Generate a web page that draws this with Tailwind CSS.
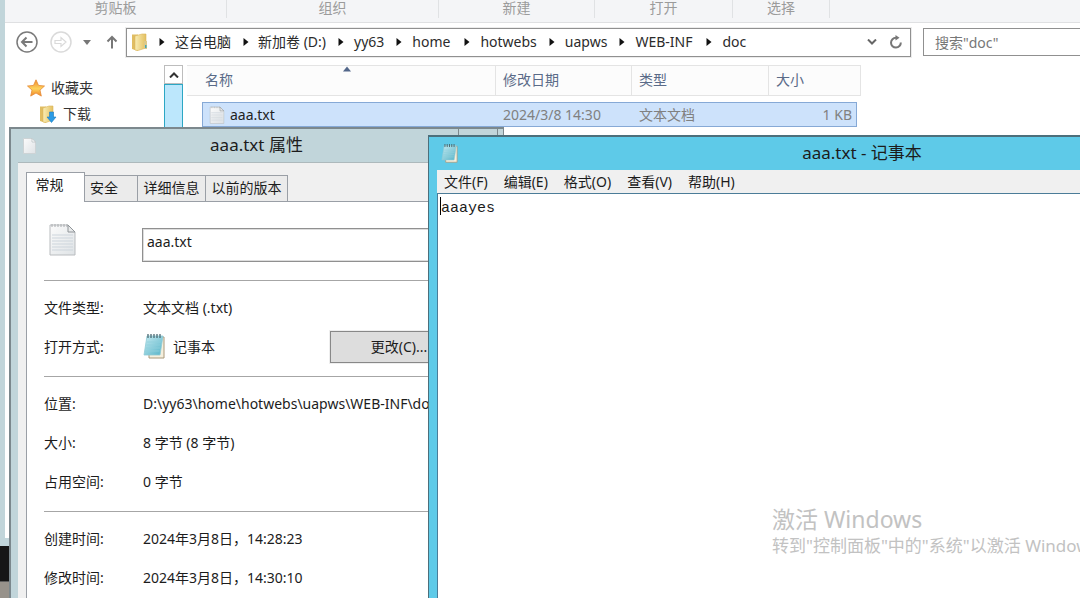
<!DOCTYPE html>
<html lang="zh-CN">
<head>
<meta charset="utf-8">
<title>doc</title>
<script src="https://cdn.jsdelivr.net/npm/@tailwindcss/browser@4"></script>
</head>
<body class="relative h-screen overflow-hidden bg-[#161616] font-['Noto_Sans','Noto_Sans_CJK_SC',sans-serif] text-sm text-[#1c1c1c]">

<svg class="absolute size-0" aria-hidden="true">
  <defs>
    <linearGradient id="folder" x1="0" y1="0" x2="1" y2="0"><stop offset="0" stop-color="#f9edb4"/><stop offset="1" stop-color="#e3c061"/></linearGradient>
    <linearGradient id="star" x1="0" y1="0" x2="0" y2="1"><stop offset="0" stop-color="#f08a2c"/><stop offset=".55" stop-color="#fdd35c"/><stop offset="1" stop-color="#f08224"/></linearGradient>
    <linearGradient id="pad" x1="0" y1="0" x2="1" y2="1"><stop offset="0" stop-color="#c8ecf2"/><stop offset="1" stop-color="#55b3c7"/></linearGradient>
    <linearGradient id="paper" x1="0" y1="0" x2="1" y2="1"><stop offset="0" stop-color="#fbfbfb"/><stop offset="1" stop-color="#dfe3e6"/></linearGradient>
    <symbol id="doc" viewBox="0 0 27 33">
      <path d="M1 2h18l7 7v23H1z" fill="url(#paper)" stroke="#b9bcbf"/>
      <path d="M19 2v7h7z" fill="#e8eaeb" stroke="#8f9498"/>
      <path d="M3 12h21M3 15h21M3 18h21M3 21h21M3 24h21M3 27h21" stroke="#cdd5dc"/>
      <path d="M3 1v3M6 1v3M9 1v3M12 1v3M15 1v3M18 1v3" stroke="#a8abae"/>
    </symbol>
    <symbol id="notepad" viewBox="0 0 22 25">
      <path d="M6 3h15v21H6z" fill="#f5efdd" stroke="#a9987a"/>
      <path d="M4 2h16l-3 19H1z" fill="url(#pad)" stroke="#8fcad6" stroke-width=".8"/>
      <path d="M4 8h14M3.500 11h14M3 14h14M2.500 17h14" stroke="#8fcfdc" stroke-width=".8"/>
      <path d="M5 0v4M8 0v4M11 0v4M14 0v4M17 0v4" stroke="#4d6b73" stroke-width="1.300"/>
    </symbol>
    <symbol id="crumb" viewBox="0 0 6 10"><path d="M.5 1v8L5.500 5z" fill="#111"/></symbol>
  </defs>
</svg>

<!-- Explorer window -->
<main class="h-[546px] border-b-8 border-l-[5px] border-[#c1d5da] bg-white">
  <div class="flex h-[23px] border-b border-[#dfe0e2] bg-[#f4f5f7] leading-4 text-[#9b9b9b]">
    <div class="mb-1 w-[222px] border-r border-[#e0e2e4] text-center">剪贴板</div>
    <div class="mb-1 w-[212px] border-r border-[#e0e2e4] text-center">组织</div>
    <div class="mb-1 w-[156px] border-r border-[#e0e2e4] text-center">新建</div>
    <div class="mb-1 w-[138px] border-r border-[#e0e2e4] text-center">打开</div>
    <div class="mb-1 w-[97px] border-r border-[#e0e2e4] text-center">选择</div>
  </div>

  <div class="flex h-[42px] items-center pb-1">
    <button aria-label="后退" class="ml-[11px]"><svg class="size-[22px]" viewBox="0 0 22 22" fill="none" stroke="#7a7a7a"><circle cx="11" cy="11" r="10" stroke-width="1.500"/><path d="M16.500 11H6M10.500 6.500L6 11l4.500 4.500" stroke-width="2"/></svg></button>
    <button aria-label="前进" class="ml-3"><svg class="size-[22px]" viewBox="0 0 22 22" fill="none" stroke="#dadada"><circle cx="11" cy="11" r="10" stroke-width="1.500"/><path d="M5 9.500h6V6.500l5 4.500-5 4.500v-3H5z" stroke-width="1.200"/></svg></button>
    <button aria-label="最近位置" class="ml-[11px]"><svg class="h-[5px] w-2" viewBox="0 0 8 5"><path d="M0 0h8L4 5z" fill="#777"/></svg></button>
    <button aria-label="上移" class="ml-[15px]"><svg class="h-3.5 w-3" viewBox="0 0 12 14" fill="none" stroke="#777" stroke-width="2"><path d="M6 13.500V2M1.500 6.500L6 2l4.500 4.500"/></svg></button>
    <nav aria-label="地址" class="ml-2 flex h-[29px] w-[785px] shrink-0 items-center border border-[#909090] bg-white text-[#2b2b2b] shadow-[0_0_0_1px_#ececec]">
      <svg class="ml-1 size-[18px]" viewBox="0 0 18 18"><path d="M1 1.500h6V18L1 16z" fill="#e0bd62"/><path d="M4 3l7-2h4v14l-8 2.500-3-.5z" fill="url(#folder)" stroke="#dcb65a" stroke-width=".6"/><path d="M13 8h3v8h-3z" fill="#dcc98a"/><path d="M14 12h1.500v3H14z" fill="#45a6b5"/></svg>
      <svg class="ml-[10px] h-[10px] w-1.5"><use href="#crumb"/></svg><button class="ml-[10px]">这台电脑</button>
      <svg class="ml-3 h-[10px] w-1.5"><use href="#crumb"/></svg><button class="ml-[9px]">新加卷 (D:)</button>
      <svg class="ml-3 h-[10px] w-1.5"><use href="#crumb"/></svg><button class="ml-[10px]">yy63</button>
      <svg class="ml-3 h-[10px] w-1.5"><use href="#crumb"/></svg><button class="ml-[10px]">home</button>
      <svg class="ml-3.5 h-[10px] w-1.5"><use href="#crumb"/></svg><button class="ml-[10px]">hotwebs</button>
      <svg class="ml-3 h-[10px] w-1.5"><use href="#crumb"/></svg><button class="ml-[10px]">uapws</button>
      <svg class="ml-3 h-[10px] w-1.5"><use href="#crumb"/></svg><button class="ml-[10px]">WEB-INF</button>
      <svg class="ml-3.5 h-[10px] w-1.5"><use href="#crumb"/></svg><button class="ml-[10px]">doc</button>
      <button aria-label="展开地址" class="ml-auto"><svg class="h-1.5 w-2.5" viewBox="0 0 10 6" fill="none" stroke="#666" stroke-width="2"><path d="M1 .5l4 4 4-4"/></svg></button>
      <button aria-label="刷新" class="mr-[7px] ml-3"><svg class="size-[14px]" viewBox="0 0 14 14" fill="none" stroke="#777" stroke-width="2"><path d="M11.800 7.500A4.900 4.900 0 1 1 7 2.800h1"/><path d="M6.500 0v5.600L10.500 2.800z" fill="#777" stroke="none"/></svg></button>
    </nav>
    <input type="search" aria-label="搜索" placeholder='搜索"doc"' class="ml-3 h-7 w-[220px] shrink-0 border border-[#909090] bg-white px-[11px] placeholder:text-[#777777]">
  </div>

  <div class="flex">
    <nav aria-label="收藏" class="flex h-[62px] w-[159px] flex-col pt-[10px] pl-[22px] text-[#333333]">
      <a href="#" class="flex h-[26px] items-center gap-1.5"><svg class="size-[18px]" viewBox="0 0 18 18"><path d="M9 .8l2.500 5.600 6 .6-4.500 4.100 1.300 6L9 14l-5.300 3.100 1.300-6L.5 7l6-.6z" fill="url(#star)" stroke="#e68a35" stroke-width=".8"/></svg>收藏夹</a>
      <a href="#" class="flex h-[26px] items-center gap-1.5 pl-3"><svg class="size-[18px]" viewBox="0 0 18 18"><path d="M1 1.500h6V18L1 16z" fill="#e0bd62"/><path d="M4 3l6-2h4v14l-7 2.500-3-.5z" fill="url(#folder)" stroke="#dcb65a" stroke-width=".6"/><path d="M10.500 7h4v5H17l-4.500 5.500L8 12h2.500z" fill="#2b9be6" stroke="#1d7cc0" stroke-width=".6"/></svg>下载</a>
    </nav>
    <div class="flex h-[65px] w-[19px] flex-col">
      <button aria-label="向上滚动" class="flex h-[19px] items-center justify-center border border-[#bdbdbd] bg-white"><svg class="h-1.5 w-2.5" viewBox="0 0 10 6" fill="none" stroke="#333" stroke-width="2"><path d="M1 5.500l4-4 4 4"/></svg></button>
      <div class="flex-1 border border-[#2ca7c4] bg-[#bce7fc]"></div>
    </div>
    <div class="relative pl-1">
      <svg class="absolute top-px left-40 h-1.5 w-2" viewBox="0 0 8 5"><path d="M0 5h8L4 0z" fill="#53678a"/></svg>
      <table class="w-[673px] table-fixed border-separate border-spacing-0 text-left text-[#808080]">
        <colgroup><col class="w-[15px]"><col class="w-[294px]"><col class="w-[136px]"><col class="w-[137px]"><col class="w-[88px]"><col class="w-1"></colgroup>
        <thead>
          <tr class="h-[31px] text-[#5a6b88]">
            <th colspan="2" class="border-y border-r border-[#e4e4e4] bg-[#fcfcfc] pb-px pl-[18px] font-normal">名称</th>
            <th class="border-y border-r border-[#e4e4e4] bg-[#fcfcfc] pb-px pl-[7px] font-normal">修改日期</th>
            <th class="border-y border-r border-[#e4e4e4] bg-[#fcfcfc] pb-px pl-[7px] font-normal">类型</th>
            <th colspan="2" class="border-y border-r border-[#e4e4e4] bg-[#fcfcfc] pb-px pl-[7px] font-normal">大小</th>
          </tr>
        </thead>
        <tbody>
          <tr class="h-1.5"><td colspan="6"></td></tr>
          <tr class="h-[25px]">
            <td></td>
            <td class="border-y border-l border-[#86a9d6] bg-[#cde2fb] pl-1.5 text-[#222222]"><div class="flex items-center gap-[5px]"><svg class="h-[18px] w-4"><use href="#doc"/></svg>aaa.txt</div></td>
            <td class="border-y border-[#86a9d6] bg-[#cde2fb] pl-[7px]">2024/3/8 14:30</td>
            <td class="border-y border-[#86a9d6] bg-[#cde2fb] pl-[7px]">文本文档</td>
            <td class="border-y border-r border-[#86a9d6] bg-[#cde2fb] pr-1 text-right">1 KB</td>
            <td></td>
          </tr>
        </tbody>
      </table>
    </div>
  </div>
</main>
<div class="h-[35px] bg-[#161616]"></div>
<div class="h-[17px] border-t border-[#5c5c5c] bg-[#97928b]"></div>

<!-- Properties window -->
<section aria-label="aaa.txt 属性" class="absolute top-[127px] bottom-0 left-[9px] flex w-[495px] flex-col overflow-hidden border-t-2 border-r border-l-2 border-[#7c888d] bg-[#c1d5da] pr-2 pl-[7px]">
  <header class="relative flex h-[33px] shrink-0 items-center">
    <svg class="ml-[5px] h-4 w-[13px]" viewBox="0 0 13 16"><path d="M.5.5H9l3.500 3.500v11.500H.5z" fill="url(#paper)" stroke="#cdd3d5"/><path d="M9 .5V4h3.500z" fill="#fff" stroke="#b5bdc0" stroke-width=".7"/></svg>
    <h1 class="flex-1 pr-[18px] text-center text-[17px]">aaa.txt 属性</h1>
    <button aria-label="关闭" class="absolute top-0 right-[-3px] h-5 w-10 border-x border-b border-[#7c888d]"></button>
  </header>
  <div class="flex flex-1 flex-col border-t border-[#adb9bc] bg-[#f0f0f0] pt-[9px] pl-2">
    <div role="tablist" class="flex items-end border-b border-[#9a9fa6]">
      <button role="tab" aria-selected="true" class="z-10 -mb-px h-[30px] w-[59px] border-x border-t border-[#9a9fa6] bg-white pr-3 pb-1.5">常规</button>
      <button role="tab" class="h-[26px] w-[53px] border-t border-r border-[#9a9fa6] bg-[#ebebeb] pr-3.5 pb-0.5">安全</button>
      <button role="tab" class="h-[26px] w-[68px] border-t border-r border-[#9a9fa6] bg-[#ebebeb] pb-0.5">详细信息</button>
      <button role="tab" class="h-[26px] w-[82px] border-t border-r border-[#9a9fa6] bg-[#ebebeb] pb-0.5">以前的版本</button>
    </div>
    <div role="tabpanel" class="flex-1 border-l border-[#9a9fa6] bg-white pl-[17px]">
      <div class="flex h-[78px] items-start">
        <svg class="mt-[21px] ml-[5px] h-[33px] w-[27px]"><use href="#doc"/></svg>
        <input type="text" aria-label="文件名" value="aaa.txt" class="mt-[26px] ml-[66px] h-[34px] w-80 border border-[#909090] bg-white px-1 pb-2 shadow-[inset_0_0_0_1px_#dddddd]">
      </div>
      <dl class="grid grid-cols-[99px_1fr] items-center border-t border-[#a6a6a6] pt-[7px] pb-[10px] leading-[39px]">
        <dt>文件类型:</dt><dd>文本文档 (.txt)</dd>
        <dt>打开方式:</dt><dd class="flex h-[39px] items-center"><svg class="h-[25px] w-[22px]"><use href="#notepad"/></svg><span class="ml-2">记事本</span><button class="mr-[27px] ml-auto h-8 w-[138px] shrink-0 border border-[#888888] bg-[#dddddd] leading-7 shadow-[0_0_0_1px_#eeeeee]">更改(C)...</button></dd>
      </dl>
      <dl class="grid grid-cols-[99px_1fr] items-center border-t border-[#a6a6a6] pt-[7px] pb-[10px] leading-[39px]">
        <dt>位置:</dt><dd>D:\yy63\home\hotwebs\uapws\WEB-INF\doc</dd>
        <dt>大小:</dt><dd>8 字节 (8 字节)</dd>
        <dt>占用空间:</dt><dd>0 字节</dd>
      </dl>
      <dl class="grid grid-cols-[99px_1fr] items-center border-t border-[#a6a6a6] pt-[7px] leading-[39px]">
        <dt>创建时间:</dt><dd>2024年3月8日，14:28:23</dd>
        <dt>修改时间:</dt><dd>2024年3月8日，14:30:10</dd>
      </dl>
    </div>
  </div>
</section>

<!-- Notepad window -->
<section aria-label="aaa.txt - 记事本" class="absolute top-[135px] bottom-0 left-[428px] flex w-[868px] flex-col border-t-2 border-l border-[#4c6f7b] bg-[#5ecae8] pl-2">
  <header class="flex h-[33px] items-center">
    <svg class="ml-1 h-[19px] w-[17px]"><use href="#notepad"/></svg>
    <h2 class="flex-1 pr-[30px] text-center text-[17px]">aaa.txt - 记事本</h2>
  </header>
  <div role="menubar" class="flex h-[23px] items-center gap-4 bg-[#f0f0f0] pl-[7px]">
    <button role="menuitem">文件(F)</button>
    <button role="menuitem">编辑(E)</button>
    <button role="menuitem">格式(O)</button>
    <button role="menuitem">查看(V)</button>
    <button role="menuitem">帮助(H)</button>
  </div>
  <div class="relative flex flex-1 border-t border-l border-[#4b7c98] bg-white">
    <textarea aria-label="文本" spellcheck="false" class="flex-1 resize-none bg-transparent px-[3px] pt-[5px] font-['Liberation_Mono',monospace] text-[15px] leading-5 outline-none">aaayes</textarea>
    <span class="absolute top-[3px] left-0.5 h-[18px] w-px bg-black"></span>
  </div>
</section>

<!-- Activation watermark -->
<aside class="absolute top-[504px] left-[772px] whitespace-nowrap text-[#c2c2c2]">
  <p class="text-[23px] leading-[30px]">激活 Windows</p>
  <p class="text-[17px] leading-6">转到"控制面板"中的"系统"以激活 Windows。</p>
</aside>
</body>
</html>
